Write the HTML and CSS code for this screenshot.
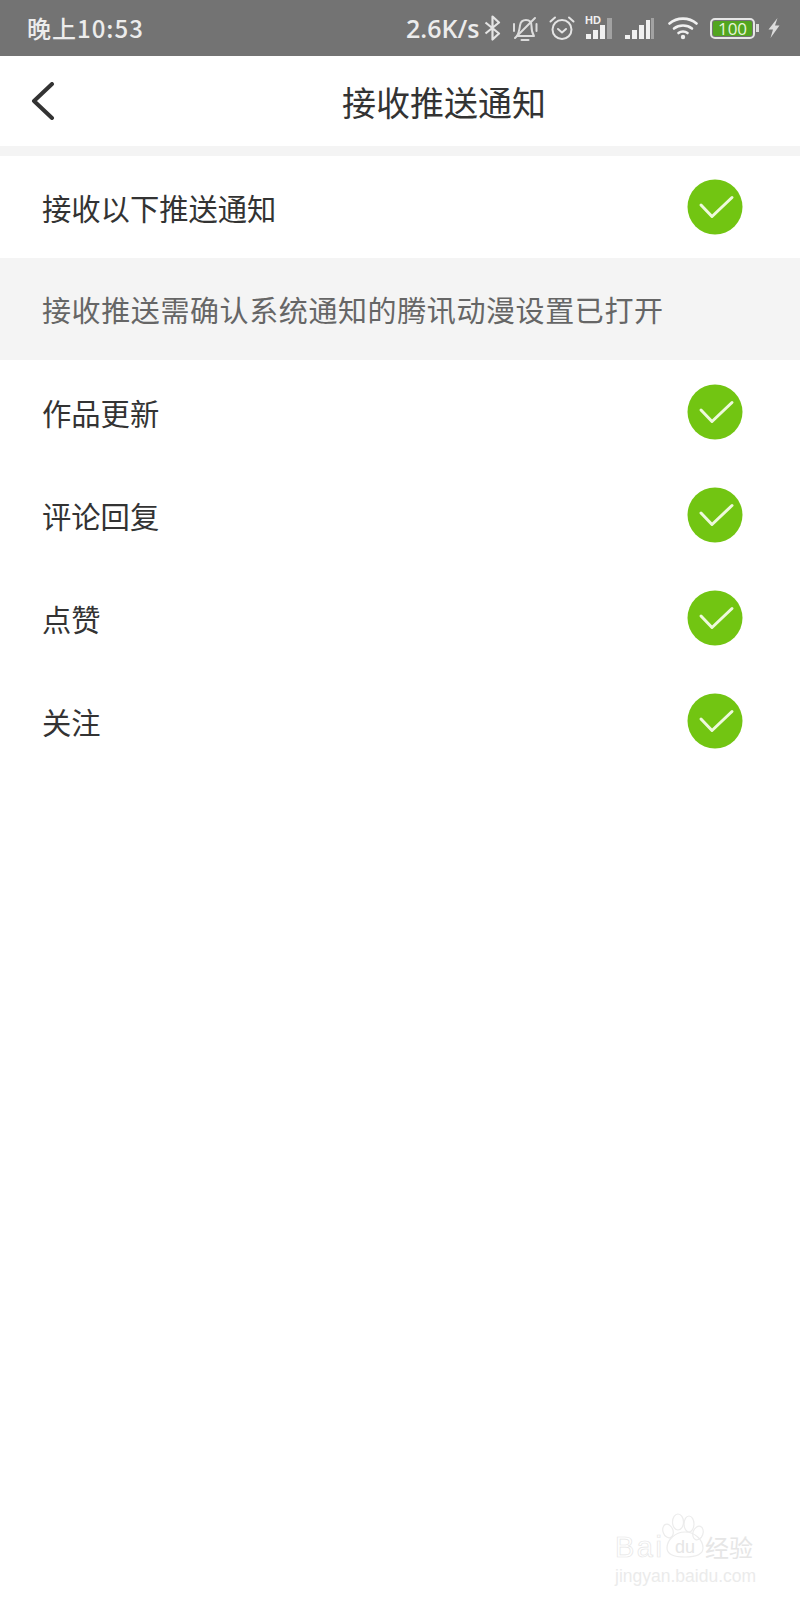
FILE: index.html
```html
<!DOCTYPE html>
<html lang="zh-CN">
<head>
<meta charset="utf-8">
<title>接收推送通知</title>
<link rel="stylesheet" href="styles.css">
</head>
<body>
<svg class="defs" width="0" height="0">
	<symbol id="check" viewBox="0 0 56 56">
		<circle cx="28" cy="28" r="27.5" fill="#72c512"/>
		<path d="M14 26 L25 37.500 L45 18.500" fill="none" stroke="#eef9dc" stroke-width="3" stroke-linecap="round" stroke-linejoin="round"/>
	</symbol>
</svg>

<div class="status">
	<span class="time">晚上10:53</span>
	<div class="status-right">
		<span class="speed">2.6K/s</span>
		<svg class="ico bt" width="17" height="26" viewBox="0 0 17 26" fill="none" stroke="#e4e4e4" stroke-width="2.2" stroke-linejoin="round">
			<path d="M1.500 7.500 L15 18.500 L8.500 24.500 V1.500 L15 7.500 L1.500 18.500"/>
		</svg>
		<svg class="ico bell" width="26" height="26" viewBox="0 0 26 26" fill="none" stroke="#dcdcdc" stroke-width="2" stroke-linecap="round" stroke-linejoin="round">
			<path d="M5 21 C7 18 7.500 14 8 10.500 C8.500 7 11 5 14 5 C18 5 19.500 8 19.500 11 C19.500 15 20 18 22 21 Z"/>
			<path d="M9.500 25 H16.500"/>
			<path d="M2 9 V16 M24.500 9 V16"/>
			<path d="M3 23 L23 3"/>
		</svg>
		<svg class="ico clock" width="26" height="26" viewBox="0 0 26 26" fill="none" stroke="#e4e4e4" stroke-width="2" stroke-linecap="round" stroke-linejoin="round">
			<circle cx="13" cy="14.500" r="9.500"/>
			<path d="M9 14 L13 17.500 L17 14"/>
			<path d="M1.500 6.500 L6 2.500 M24.500 6.500 L20 2.500"/>
		</svg>
		<svg class="ico signal-hd" width="30" height="26" viewBox="0 0 30 26">
			<text x="0" y="9" class="hd">HD</text>
			<rect x="1" y="19" width="5" height="5" fill="#f0f0f0"/>
			<rect x="8" y="15" width="5" height="9" fill="#f0f0f0"/>
			<rect x="15" y="10" width="5" height="14" fill="#f0f0f0"/>
			<rect x="22" y="3" width="5" height="21" fill="#a2a2a2"/>
		</svg>
		<svg class="ico signal" width="30" height="26" viewBox="0 0 30 26">
			<rect x="0" y="20" width="5" height="4" fill="#f0f0f0"/>
			<rect x="7" y="15" width="5" height="9" fill="#f0f0f0"/>
			<rect x="14" y="10" width="5" height="14" fill="#f0f0f0"/>
			<rect x="21" y="5" width="4" height="19" fill="#f0f0f0"/>
			<rect x="26" y="3" width="3" height="21" fill="#a2a2a2"/>
		</svg>
		<svg class="ico wifi" width="30" height="24" viewBox="0 0 30 24" fill="none" stroke="#f0f0f0" stroke-width="2.600" stroke-linecap="round">
			<path d="M1.500 7.500 C9 1 21 1 28.500 7.500"/>
			<path d="M6 12.500 C11 8.500 19 8.500 24 12.500"/>
			<path d="M10.500 17 C13 15 17 15 19.500 17"/>
			<circle cx="15" cy="21" r="2.200" fill="#f0f0f0" stroke="none"/>
		</svg>
		<div class="battery"><span class="battery-fill">100</span></div>
		<i class="battery-tip"></i>
		<svg class="ico bolt" width="12" height="20" viewBox="0 0 12 20">
			<path d="M9.500 0 L0.500 11.500 H5 L2.500 20 L11.500 7.500 H7 Z" fill="#dcdcdc"/>
		</svg>
	</div>
</div>

<div class="nav">
	<svg class="back" width="25" height="38" viewBox="0 0 25 38" fill="none" stroke="#333" stroke-width="4" stroke-linecap="round" stroke-linejoin="round">
		<path d="M21 2 L3 19 L21 36"/>
	</svg>
	<span class="nav-title">接收推送通知</span>
</div>

<div class="row first">
	<span>接收以下推送通知</span>
	<svg class="tick"><use href="#check"/></svg>
</div>
<div class="notice">接收推送需确认系统通知的腾讯动漫设置已打开</div>
<div class="row">
	<span>作品更新</span>
	<svg class="tick"><use href="#check"/></svg>
</div>
<div class="row">
	<span>评论回复</span>
	<svg class="tick"><use href="#check"/></svg>
</div>
<div class="row">
	<span>点赞</span>
	<svg class="tick"><use href="#check"/></svg>
</div>
<div class="row">
	<span>关注</span>
	<svg class="tick"><use href="#check"/></svg>
</div>

<div class="mark">
	<svg class="paw" width="50" height="48" viewBox="0 0 50 48" fill="none" stroke="#ececec" stroke-width="1.200">
		<ellipse cx="18" cy="10" rx="5.500" ry="8"/>
		<ellipse cx="29" cy="12" rx="5" ry="8"/>
		<ellipse cx="8" cy="19" rx="5" ry="7" transform="rotate(-20 8 19)"/>
		<ellipse cx="38" cy="21" rx="5" ry="7" transform="rotate(20 38 21)"/>
		<path d="M7 36 C7 28 15 20 25 20 C35 20 43 28 43 36 C43 42 37 45 25 45 C13 45 7 42 7 36 Z"/>
	</svg>
	<div class="mark-line">
		<span class="mark-bai">Bai</span>
		<span class="mark-du">du</span>
		<span class="mark-cn">经验</span>
	</div>
	<div class="mark-url">jingyan.baidu.com</div>
</div>
</body>
</html>
```

FILE: styles.css
```css
html, body {
	margin: 0;
	padding: 0;
}

body {
	position: relative;
	width: 800px;
	height: 1600px;
	overflow: hidden;
	background: #fff;
	font-family: "Noto Sans CJK SC", "Liberation Sans", sans-serif;
	color: #333;
}

.defs {
	position: absolute;
}

/* status bar */
.status {
	display: flex;
	align-items: center;
	justify-content: space-between;
	height: 56px;
	padding: 0 20px 0 27px;
	background: #737373;
	color: #ececec;
}

.time {
	margin-top: -2px;
	font-size: 24px;
	font-weight: 500;
	letter-spacing: 1px;
}

.status-right {
	display: flex;
	align-items: center;
}

.speed {
	width: 78px;
	font-family: "Open Sans", "Liberation Sans", sans-serif;
	font-size: 25px;
	font-weight: 600;
	white-space: nowrap;
}

.ico {
	display: block;
	margin-right: 11px;
}

.clock,
.signal-hd { margin-right: 10px; }
.signal { margin-right: 13px; }
.wifi { margin-right: 12px; }
.bolt { margin-right: 0; }

.hd {
	font-family: "Liberation Sans", sans-serif;
	font-size: 11px;
	font-weight: bold;
	fill: #f0f0f0;
}

.battery {
	width: 39px;
	height: 15px;
	padding: 1px;
	border: 2px solid #e6e6e6;
	border-radius: 5px;
}

.battery-fill {
	display: block;
	height: 15px;
	line-height: 15px;
	background: #52a520;
	border-radius: 2px;
	color: #e8f5da;
	font-family: "Open Sans", sans-serif;
	font-size: 17px;
	text-align: center;
}

.battery-tip {
	display: block;
	width: 3px;
	height: 8px;
	margin: 0 9px 0 1px;
	background: #dcdcdc;
}

/* title bar */
.nav {
	position: relative;
	display: flex;
	align-items: center;
	justify-content: center;
	height: 90px;
	border-bottom: 10px solid #f4f4f4;
}

.back {
	position: absolute;
	left: 31px;
	top: 26px;
}

.nav-title {
	margin-left: 88px;
	font-size: 34px;
	color: #333;
}

/* list */
.row {
	display: flex;
	align-items: center;
	justify-content: space-between;
	height: 103px;
	padding: 0 57px 0 42px;
	font-size: 29.300px;
	color: #333;
}

.row.first {
	height: 102px;
}

.tick {
	width: 56px;
	height: 56px;
}

.notice {
	display: flex;
	align-items: center;
	height: 102px;
	padding-left: 42px;
	background: #f4f4f4;
	font-size: 29px;
	letter-spacing: 0.600px;
	color: #666;
}

/* watermark */
.mark {
	position: absolute;
	left: 615px;
	top: 1512px;
	width: 150px;
	color: #fff;
}

.paw {
	position: absolute;
	left: 45px;
	top: 0;
}

.mark-line {
	display: flex;
	align-items: center;
	height: 26px;
	margin-top: 22px;
	line-height: 26px;
	font-family: "Liberation Sans", sans-serif;
	-webkit-text-stroke: 0.700px #e6e6e6;
}

.mark-bai {
	width: 52px;
	font-size: 29px;
	letter-spacing: 2.500px;
}

.mark-du {
	width: 36px;
	font-size: 18px;
	text-align: center;
	-webkit-text-stroke: 0;
	color: #e6e6e6;
}

.mark-cn {
	margin-left: 2px;
	font-family: "Noto Sans CJK SC", sans-serif;
	font-size: 24px;
	-webkit-text-stroke: 0;
	color: #e6e6e6;
}

.mark-url {
	margin-top: 6px;
	font-family: "Liberation Sans", sans-serif;
	font-size: 17.500px;
	color: #ebebeb;
	white-space: nowrap;
}
```
